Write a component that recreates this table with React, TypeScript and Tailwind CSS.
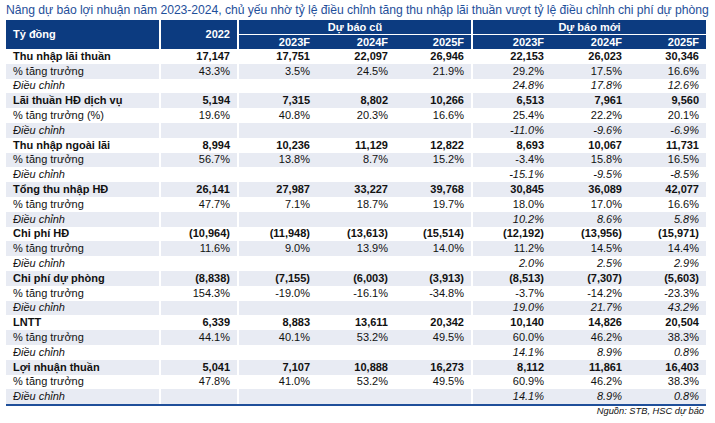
import React from "react";

type Row = { label: string; kind: "main" | "pct" | "adj"; vals: string[] };

const groups: [string, string[], string[], string[], string?][] = [
  ["Thu nhập lãi thuần", ["17,147", "17,751", "22,097", "26,946", "22,153", "26,023", "30,346"], ["43.3%", "3.5%", "24.5%", "21.9%", "29.2%", "17.5%", "16.6%"], ["", "", "", "", "24.8%", "17.8%", "12.6%"]],
  ["Lãi thuần HĐ dịch vụ", ["5,194", "7,315", "8,802", "10,266", "6,513", "7,961", "9,560"], ["19.6%", "40.8%", "20.3%", "16.6%", "25.4%", "22.2%", "20.1%"], ["", "", "", "", "-11.0%", "-9.6%", "-6.9%"], "% tăng trưởng (%)"],
  ["Thu nhập ngoài lãi", ["8,994", "10,236", "11,129", "12,822", "8,693", "10,067", "11,731"], ["56.7%", "13.8%", "8.7%", "15.2%", "-3.4%", "15.8%", "16.5%"], ["", "", "", "", "-15.1%", "-9.5%", "-8.5%"]],
  ["Tổng thu nhập HĐ", ["26,141", "27,987", "33,227", "39,768", "30,845", "36,089", "42,077"], ["47.7%", "7.1%", "18.7%", "19.7%", "18.0%", "17.0%", "16.6%"], ["", "", "", "", "10.2%", "8.6%", "5.8%"]],
  ["Chi phí HĐ", ["(10,964)", "(11,948)", "(13,613)", "(15,514)", "(12,192)", "(13,956)", "(15,971)"], ["11.6%", "9.0%", "13.9%", "14.0%", "11.2%", "14.5%", "14.4%"], ["", "", "", "", "2.0%", "2.5%", "2.9%"]],
  ["Chi phí dự phòng", ["(8,838)", "(7,155)", "(6,003)", "(3,913)", "(8,513)", "(7,307)", "(5,603)"], ["154.3%", "-19.0%", "-16.1%", "-34.8%", "-3.7%", "-14.2%", "-23.3%"], ["", "", "", "", "19.0%", "21.7%", "43.2%"]],
  ["LNTT", ["6,339", "8,883", "13,611", "20,342", "10,140", "14,826", "20,504"], ["44.1%", "40.1%", "53.2%", "49.5%", "60.0%", "46.2%", "38.3%"], ["", "", "", "", "14.1%", "8.9%", "0.8%"]],
  ["Lợi nhuận thuần", ["5,041", "7,107", "10,888", "16,273", "8,112", "11,861", "16,403"], ["47.8%", "41.0%", "53.2%", "49.5%", "60.9%", "46.2%", "38.3%"], ["", "", "", "", "14.1%", "8.9%", "0.8%"]],
];

const rows: Row[] = [];
groups.forEach(([label, main, pct, adj, pctLabel]) => {
  rows.push({ label, kind: "main", vals: main });
  rows.push({ label: pctLabel ?? "% tăng trưởng", kind: "pct", vals: pct });
  rows.push({ label: "Điều chỉnh", kind: "adj", vals: adj });
});

const cols = "grid grid-cols-[155px_78px_78px_78px_78px_78px_78px_77px]";

export default function App() {
  return (
    <div className="w-[715px] h-[423px] bg-white font-['Liberation_Sans',Arial,sans-serif] text-[#111] overflow-hidden">
      <div className="pl-[6px] pt-[3px] h-[20px] text-[12.2px] leading-[14px] text-[#1f4f9a] whitespace-nowrap tracking-[-0.05px]">
        Nâng dự báo lợi nhuận năm 2023-2024, chủ yếu nhờ tỷ lệ điều chỉnh tăng thu nhập lãi thuần vượt tỷ lệ điều chỉnh chi phí dự phòng
      </div>
      <div className="ml-[6px] w-[700px]">
        <div className={`${cols} grid-rows-[15px_14px] bg-[#0c3b80] text-white font-bold text-[11px] leading-none`}>
          <div className="row-span-2 flex items-center pl-[7px] border-r-2 border-white">Tỷ đồng</div>
          <div className="row-span-2 flex items-center justify-end pr-[7px] border-r-2 border-white">2022</div>
          <div className="col-span-3 flex items-center justify-center border-b border-white border-r-2">Dự báo cũ</div>
          <div className="col-span-3 flex items-center justify-center border-b border-white">Dự báo mới</div>
          <div className="flex items-center justify-end pr-[7px]">2023F</div>
          <div className="flex items-center justify-end pr-[7px]">2024F</div>
          <div className="flex items-center justify-end pr-[7px] border-r-2 border-white">2025F</div>
          <div className="flex items-center justify-end pr-[7px]">2023F</div>
          <div className="flex items-center justify-end pr-[7px]">2024F</div>
          <div className="flex items-center justify-end pr-[7px]">2025F</div>
        </div>
        <div className="border-b-2 border-[#1f4f9a]">
          {rows.map((r, i) => {
            const shaded = i % 2 === 1;
            const txt =
              r.kind === "main" ? "font-bold" : r.kind === "adj" ? "italic" : "";
            return (
              <div
                key={i}
                className={`${cols} h-[14.8px] text-[11px] leading-none ${shaded ? "bg-[#e8ebf3]" : "bg-white"} ${txt}`}
              >
                <div className="flex items-center pl-[7px] border-r-2 border-white whitespace-nowrap">{r.label}</div>
                {r.vals.map((v, j) => (
                  <div
                    key={j}
                    className={`flex items-center justify-end pr-[7px] ${j === 0 || j === 3 ? "border-r-2 border-white" : ""}`}
                  >
                    {v}
                  </div>
                ))}
              </div>
            );
          })}
        </div>
        <div className="text-right pr-[2px] pt-[1px] text-[9.3px] italic leading-none">Nguồn: STB, HSC dự báo</div>
      </div>
    </div>
  );
}
